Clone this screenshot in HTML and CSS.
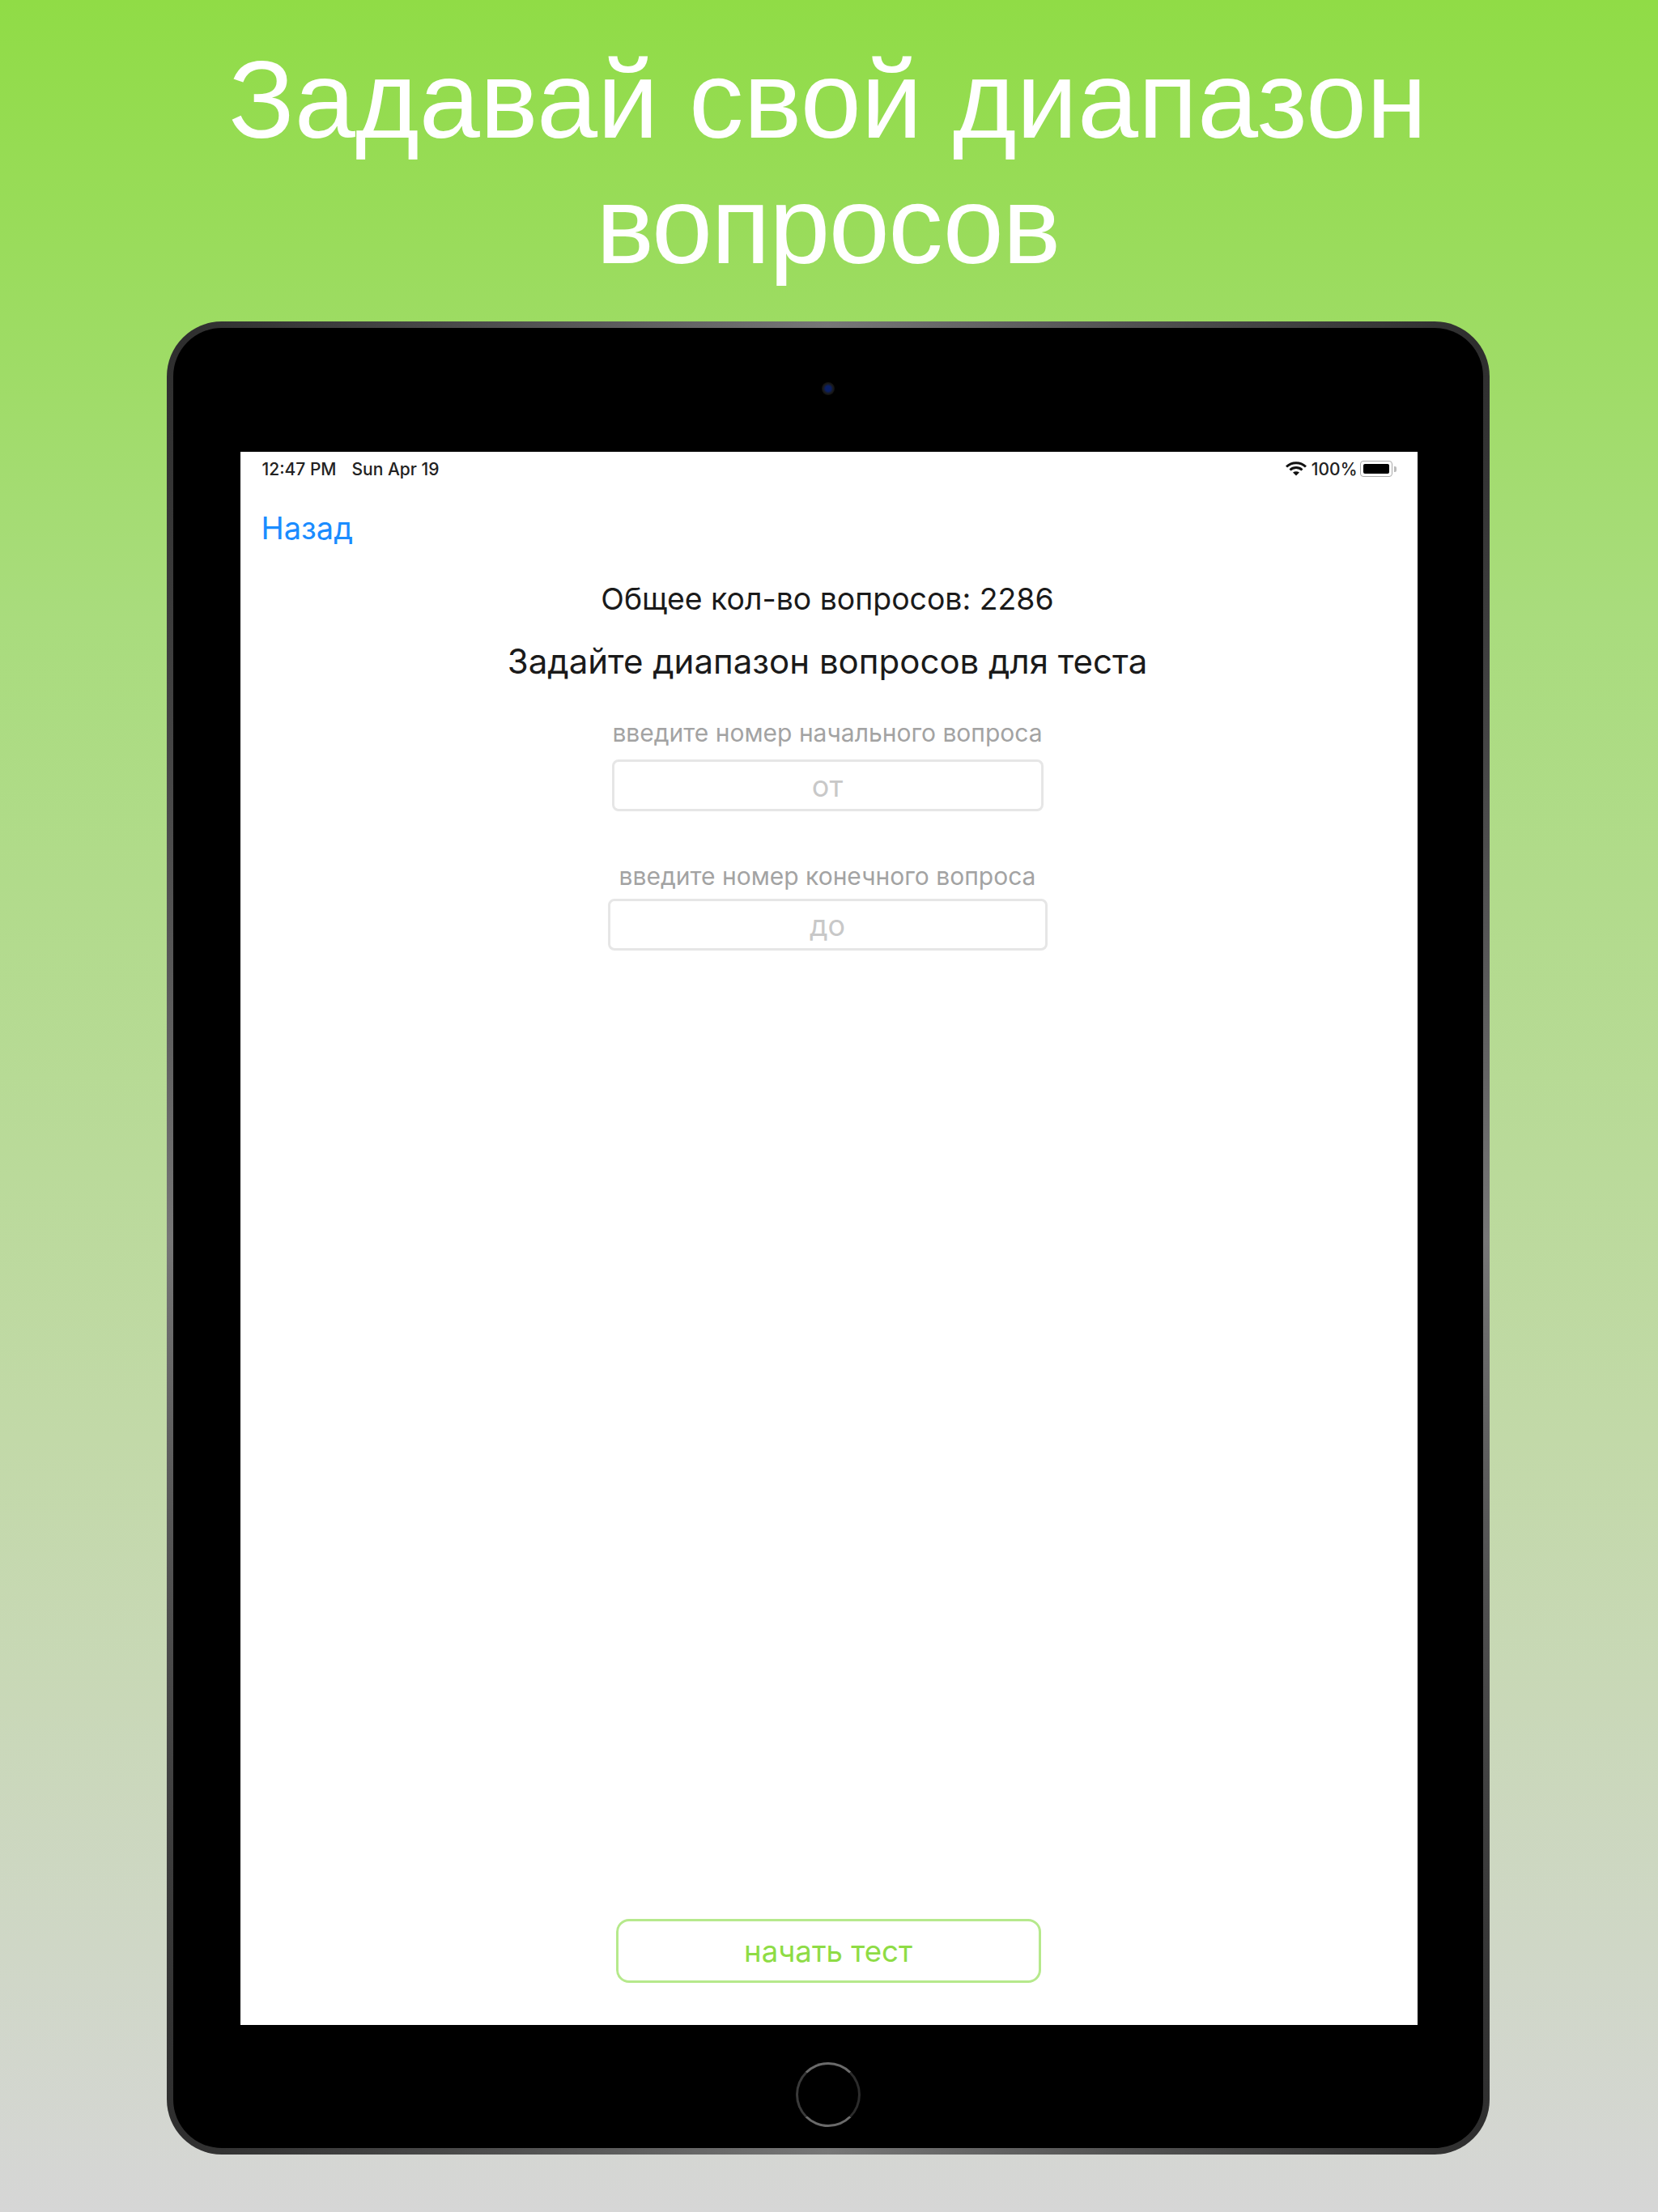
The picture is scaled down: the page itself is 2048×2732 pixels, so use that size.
FILE: index.html
```html
<!DOCTYPE html>
<html lang="ru">
<head>
    <meta charset="UTF-8">
    <meta name="viewport" content="width=device-width, initial-scale=1.0">
    <title>Задавай свой диапазон вопросов</title>
    <link rel="stylesheet" href="styles.css">
</head>
<body>

<h1 class="promo-title">Задавай свой диапазон<br><span class="promo-title-second">вопросов</span></h1>

<div class="device">
    <!-- Top bezel -->
    <div class="bezel-top">
        <div class="camera"></div>
    </div>

    <!-- Screen -->
    <div class="screen">
        <div class="status-bar">
            <div class="status-left">
                <span>12:47 PM</span>
                <span>Sun Apr 19</span>
            </div>
            <div class="status-right">
                <svg class="wifi-icon" viewBox="0 0 26 18">
                    <path d="M1 6.5C7.8 0 18.2 0 25 6.5" />
                    <path d="M5.5 10.5C9.8 6.6 16.2 6.6 20.5 10.5" />
                    <path class="wifi-dot" d="M13 17.5L9 13.6C11.4 11.8 14.6 11.8 17 13.6Z" />
                </svg>
                <span>100%</span>
                <div class="battery"><div class="battery-level"></div></div>
                <div class="battery-tip"></div>
            </div>
        </div>

        <a class="back-link" href="#">Назад</a>

        <div class="range-form">
            <p class="total-count">Общее кол-во вопросов: 2286</p>
            <p class="form-title">Задайте диапазон вопросов для теста</p>

            <label class="field-label field-label-from" for="fromInput">введите номер начального вопроса</label>
            <input class="field field-from" id="fromInput" type="text" placeholder="от">

            <label class="field-label field-label-to" for="toInput">введите номер конечного вопроса</label>
            <input class="field field-to" id="toInput" type="text" placeholder="до">
        </div>

        <button class="start-button" type="button">начать тест</button>
    </div>

    <!-- Bottom bezel -->
    <div class="bezel-bottom">
        <div class="home-button"></div>
    </div>
</div>

</body>
</html>
```

FILE: styles.css
```css
/* General Reset */
* {
    box-sizing: border-box;
    margin: 0;
    padding: 0;
}

body {
    min-height: 100vh;
    padding-right: 3px;
    display: flex;
    flex-direction: column;
    align-items: center;
    font-family: Inter, "Noto Sans", sans-serif;
    background: linear-gradient(180deg, #90dc46 0%, #a9dc7d 28%, #c2d9a8 65%, #d6d6d6 100%);
}

/* Promo heading */
.promo-title {
    height: 397px;
    padding-top: 46px;
    font-family: "Liberation Sans", Arial, sans-serif;
    font-size: 135px;
    font-weight: 400;
    line-height: 155px;
    text-align: center;
    color: #fff;
}

.promo-title-second {
    letter-spacing: -1.5px;
}

/* Tablet frame */
.device {
    width: 1634px;
    height: 2264px;
    display: flex;
    flex-direction: column;
    border: 8px solid transparent;
    border-radius: 68px;
    background:
        linear-gradient(#000, #000) padding-box,
        conic-gradient(#777 0deg, #2e2e2e 36deg, #777 90deg, #2e2e2e 144deg, #777 180deg, #2e2e2e 216deg, #777 270deg, #2e2e2e 324deg, #777 360deg) border-box;
}

.bezel-top {
    height: 153px;
    display: flex;
    justify-content: center;
    padding-top: 67px;
}

.camera {
    width: 16px;
    height: 16px;
    border-radius: 50%;
    background: radial-gradient(circle, #0a1f66 0 28%, #1a1a1a 55%, #000 100%);
}

.bezel-bottom {
    flex: 1;
    display: flex;
    justify-content: center;
    padding-top: 46px;
}

.home-button {
    width: 80px;
    height: 80px;
    border: 3px solid;
    border-color: #6a6a6a #2c2c2c #6a6a6a #3a3a3a;
    border-radius: 50%;
}

/* Screen */
.screen {
    width: 1454px;
    height: 1943px;
    margin-left: 83px;
    display: flex;
    flex-direction: column;
    background-color: #fff;
}

.status-bar {
    height: 42px;
    padding: 0 26px 0 27px;
    display: flex;
    justify-content: space-between;
    align-items: center;
    font-size: 21px;
    font-weight: 500;
    color: #222;
}

.status-left {
    display: flex;
    gap: 19px;
}

.status-right {
    display: flex;
    align-items: center;
}

.wifi-icon {
    width: 26px;
    height: 18px;
    margin-right: 6px;
}

.wifi-icon path {
    fill: none;
    stroke: #111;
    stroke-width: 3;
}

.wifi-icon .wifi-dot {
    fill: #111;
    stroke: none;
}

.battery {
    width: 40px;
    height: 20px;
    margin-left: 3px;
    padding: 3px;
    border: 1px solid #aaa;
    border-radius: 4px;
}

.battery-level {
    height: 100%;
    border-radius: 2px;
    background-color: #000;
}

.battery-tip {
    width: 3px;
    height: 7px;
    margin-left: 2px;
    border-radius: 0 2px 2px 0;
    background-color: #bbb;
}

.back-link {
    align-self: flex-start;
    margin: 28px 0 0 26px;
    font-size: 38px;
    line-height: 48px;
    color: #1a8cff;
    text-decoration: none;
}

/* Range form */
.range-form {
    padding-right: 3px;
    display: flex;
    flex-direction: column;
    align-items: center;
}

.total-count {
    margin-top: 39px;
    font-size: 37.4px;
    line-height: 50px;
    color: #1a1a1a;
}

.form-title {
    margin-top: 27px;
    font-size: 42px;
    line-height: 50px;
    color: #1a1a1a;
}

.field-label {
    font-size: 30px;
    line-height: 40px;
    color: #a3a3a3;
}

.field-label-from {
    margin-top: 43px;
}

.field-label-to {
    margin-top: 60px;
}

.field {
    height: 64px;
    padding-top: 2px;
    border: 3px solid #e6e6e6;
    border-radius: 8px;
    outline: none;
    font-family: inherit;
    font-size: 36px;
    text-align: center;
    background-color: #fff;
}

.field::placeholder {
    color: #c8c8c8;
    opacity: 1;
}

.field-from {
    width: 533px;
    margin-top: 13px;
}

.field-to {
    width: 543px;
    margin-top: 8px;
}

.start-button {
    width: 525px;
    height: 79px;
    margin: auto 0 52px 464px;
    border: 3px solid #b6e98c;
    border-radius: 16px;
    font-family: inherit;
    font-size: 36.6px;
    color: #8edc45;
    background-color: #fff;
}
```
